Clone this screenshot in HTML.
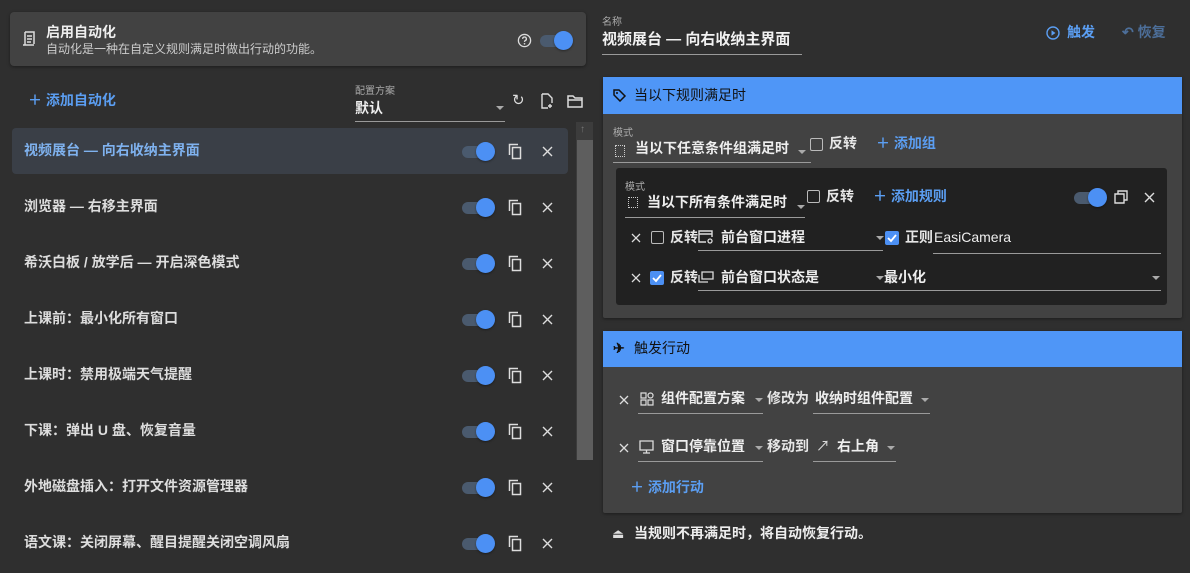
<!DOCTYPE html>
<html><head><meta charset="utf-8"><style>
*{box-sizing:border-box;margin:0;padding:0}
body{width:1190px;height:573px;background:#2f2f2f;font-family:"Liberation Sans","Noto Sans CJK SC",sans-serif;color:#e6e6e6;position:relative;overflow:hidden;line-height:1.25}
.a{position:absolute;white-space:nowrap}
.card{position:absolute;background:#424242;border-radius:4px;box-shadow:0 1px 3px rgba(0,0,0,.4)}
.blue{color:#5b9ef2}
.tg{position:absolute;width:34px;height:22px}
.tg:before{content:"";position:absolute;left:0;top:6px;width:30px;height:12px;border-radius:6px;background:#4a5a6e}
.tg:after{content:"";position:absolute;left:14px;top:2px;width:19px;height:19px;border-radius:50%;background:#4c90f4;box-shadow:0 1px 2px rgba(0,0,0,.4)}
.ul{position:absolute;height:1px;background:#9a9a9a}
.arr{position:absolute;width:0;height:0;border-left:4px solid transparent;border-right:4px solid transparent;border-top:4px solid #aaa}
.cb{position:absolute;width:13px;height:13px;border:1.5px solid #bbb;border-radius:2px}
.cbc{position:absolute;width:14px;height:14px;background:#4c90f4;border-radius:2px}
.lbl{font-size:10px;color:#aaa}
.row{font-size:14px;font-weight:bold;color:#ddd}
</style></head><body>

<div class="card" style="left:10px;top:12px;width:576px;height:54px"></div>
<svg class="a" style="left:21px;top:30px" width="16" height="18" viewBox="0 0 16 18"><path d="M4 2h9v12M4 2v13H2M4 15h9M6 6h5M6 9h5M6 12h4" stroke="#ddd" stroke-width="1.5" fill="none"/></svg>
<div class="a" style="left:46px;top:24px;font-size:14px;font-weight:bold;color:#eee">启用自动化</div>
<div class="a" style="left:46px;top:42px;font-size:12px;color:#ccc">自动化是一种在自定义规则满足时做出行动的功能。</div>
<svg class="a" style="left:517px;top:33px" width="15" height="15" viewBox="0 0 16 16"><circle cx="8" cy="8" r="6.5" stroke="#ddd" stroke-width="1.4" fill="none"/><path d="M6 6.3a2 2 0 1 1 2.6 1.9c-.5.2-.6.6-.6 1.3" stroke="#ddd" stroke-width="1.4" fill="none"/><circle cx="8" cy="11.5" r=".9" fill="#ddd"/></svg>
<div class="tg" style="left:540px;top:29px"></div>

<div class="a blue" style="left:28px;top:92px;font-size:14px;font-weight:bold">＋ 添加自动化</div>
<div class="a lbl" style="left:355px;top:86px">配置方案</div>
<div class="a" style="left:355px;top:100px;font-size:14px;font-weight:bold;color:#eee">默认</div>
<div class="ul" style="left:355px;top:121px;width:150px"></div>
<div class="arr" style="left:496px;top:106px"></div>
<div class="a" style="left:512px;top:92px;font-size:15px;color:#ddd">↻</div>
<svg class="a" style="left:540px;top:93px" width="14" height="16" viewBox="0 0 14 16"><path d="M2 1h6l4 4v5M2 1v14h6M10 11v4M8 13h4" stroke="#ddd" stroke-width="1.4" fill="none"/></svg>
<svg class="a" style="left:567px;top:95px" width="16" height="13" viewBox="0 0 16 13"><path d="M1 1h5l2 2h7v9H1z M1 5h14" stroke="#ddd" stroke-width="1.5" fill="none"/></svg>

<div class="a" style="left:576px;top:122px;width:17px;height:338px;background:#3c3c3c"></div>
<div class="a" style="left:577px;top:140px;width:16px;height:320px;background:#5e5e5e"></div>
<div class="a" style="left:580px;top:124px;font-size:10px;color:#777">↑</div>

<div class="a" style="left:12px;top:128px;width:556px;height:46px;background:#3a3f47;border-radius:4px"></div>
<div class="a row" style="left:24px;top:142px;color:#7fb2ef">视频展台 — 向右收纳主界面</div>
<div class="a row" style="left:24px;top:198px">浏览器 — 右移主界面</div>
<div class="a row" style="left:24px;top:254px">希沃白板 / 放学后 — 开启深色模式</div>
<div class="a row" style="left:24px;top:310px">上课前：最小化所有窗口</div>
<div class="a row" style="left:24px;top:366px">上课时：禁用极端天气提醒</div>
<div class="a row" style="left:24px;top:422px">下课：弹出 U 盘、恢复音量</div>
<div class="a row" style="left:24px;top:478px">外地磁盘插入：打开文件资源管理器</div>
<div class="a row" style="left:24px;top:534px">语文课：关闭屏幕、醒目提醒关闭空调风扇</div>

<div id="ctl"></div>
<script>
var h='';[151,207,263,319,375,431,487,543].forEach(function(y){
h+='<div class="tg" style="left:462px;top:'+(y-11)+'px"></div>';
h+='<svg class="a" style="left:508px;top:'+(y-8)+'px" width="15" height="17" viewBox="0 0 15 17"><path d="M1.5 12V1.5H10" stroke="#ddd" stroke-width="1.5" fill="none"/><rect x="4.5" y="4.5" width="8" height="11" stroke="#ddd" stroke-width="1.5" fill="none"/></svg>';
h+='<svg class="a" style="left:542px;top:'+(y-5)+'px" width="11" height="11" viewBox="0 0 11 11"><path d="M1 1l9 9M10 1l-9 9" stroke="#ddd" stroke-width="1.4"/></svg>';
});document.getElementById('ctl').innerHTML=h;
</script>

<div class="a lbl" style="left:602px;top:17px">名称</div>
<div class="a" style="left:602px;top:31px;font-size:15px;font-weight:bold;color:#f2f2f2">视频展台 — 向右收纳主界面</div>
<div class="ul" style="left:602px;top:54px;width:200px"></div>
<svg class="a" style="left:1046px;top:26px" width="14" height="14" viewBox="0 0 14 14"><circle cx="7" cy="7" r="6" stroke="#5b9ef2" stroke-width="1.4" fill="none"/><path d="M5.5 4.3v5.4L9.5 7z" fill="#5b9ef2"/></svg>
<div class="a blue" style="left:1067px;top:24px;font-size:14px;font-weight:bold">触发</div>
<div class="a" style="left:1122px;top:24px;font-size:14px;font-weight:bold;color:#4d6f9a">↶ 恢复</div>

<div class="card" style="left:603px;top:77px;width:579px;height:241px;border-radius:2px"></div>
<div class="a" style="left:603px;top:77px;width:579px;height:37px;background:#4f96f7"></div>
<svg class="a" style="left:613px;top:89px" width="14" height="13" viewBox="0 0 14 13"><path d="M1 1h5l6 6-5 5-6-6z" stroke="#111" stroke-width="1.5" fill="none"/><circle cx="4" cy="4" r="1" fill="#111"/></svg>
<div class="a" style="left:634px;top:87px;font-size:14px;color:#111">当以下规则满足时</div>

<div class="a lbl" style="left:613px;top:128px">模式</div>
<div class="a" style="left:615px;top:145px;width:10px;height:12px;border:1.5px dotted #ccc"></div>
<div class="a" style="left:635px;top:140px;font-size:14px;font-weight:bold;color:#eee">当以下任意条件组满足时</div>
<div class="ul" style="left:613px;top:162px;width:198px"></div>
<div class="arr" style="left:798px;top:150px"></div>
<div class="cb" style="left:810px;top:138px"></div>
<div class="a" style="left:829px;top:135px;font-size:14px;font-weight:bold">反转</div>
<div class="a blue" style="left:876px;top:135px;font-size:14px;font-weight:bold">＋ 添加组</div>

<div class="a" style="left:616px;top:168px;width:551px;height:137px;background:#212121;border-radius:3px"></div>
<div class="a lbl" style="left:625px;top:182px">模式</div>
<div class="a" style="left:628px;top:197px;width:10px;height:11px;border:1.5px dotted #ccc"></div>
<div class="a" style="left:647px;top:194px;font-size:14px;font-weight:bold;color:#eee">当以下所有条件满足时</div>
<div class="ul" style="left:625px;top:217px;width:180px"></div>
<div class="arr" style="left:797px;top:205px"></div>
<div class="cb" style="left:807px;top:190px"></div>
<div class="a" style="left:826px;top:188px;font-size:14px;font-weight:bold">反转</div>
<div class="a blue" style="left:873px;top:188px;font-size:14px;font-weight:bold">＋ 添加规则</div>
<div class="tg" style="left:1074px;top:186px"></div>
<svg class="a" style="left:1114px;top:190px" width="14" height="14" viewBox="0 0 14 14"><path d="M4 4V1h9v9h-3M1 4h9v9H1z" stroke="#ddd" stroke-width="1.4" fill="none"/></svg>
<svg class="a" style="left:1144px;top:192px" width="11" height="11" viewBox="0 0 11 11"><path d="M1 1l9 9M10 1l-9 9" stroke="#ddd" stroke-width="1.4"/></svg>

<svg class="a" style="left:631px;top:233px" width="10" height="10" viewBox="0 0 10 10"><path d="M1 1l8 8M9 1l-8 8" stroke="#ddd" stroke-width="1.3"/></svg>
<div class="cb" style="left:651px;top:231px"></div>
<div class="a" style="left:670px;top:229px;font-size:14px;font-weight:bold">反转</div>
<svg class="a" style="left:698px;top:230px" width="16" height="14" viewBox="0 0 16 14"><path d="M8 12H1V1h13v6M1 4h13" stroke="#ddd" stroke-width="1.4" fill="none"/><circle cx="12" cy="11" r="2" stroke="#ddd" stroke-width="1.3" fill="none"/></svg>
<div class="a" style="left:721px;top:229px;font-size:14px;font-weight:bold;color:#eee">前台窗口进程</div>
<div class="ul" style="left:698px;top:250px;width:185px"></div>
<div class="arr" style="left:876px;top:236px"></div>
<div class="cbc" style="left:885px;top:231px"></div>
<svg class="a" style="left:885px;top:231px" width="14" height="14"><path d="M3 7l3 3 5-6" stroke="#fff" stroke-width="1.8" fill="none"/></svg>
<div class="a" style="left:905px;top:229px;font-size:14px;font-weight:bold">正则</div>
<div class="a" style="left:934px;top:229px;font-size:14px;color:#eee">EasiCamera</div>
<div class="ul" style="left:933px;top:253px;width:228px"></div>

<svg class="a" style="left:631px;top:273px" width="10" height="10" viewBox="0 0 10 10"><path d="M1 1l8 8M9 1l-8 8" stroke="#ddd" stroke-width="1.3"/></svg>
<div class="cbc" style="left:650px;top:271px"></div>
<svg class="a" style="left:650px;top:271px" width="14" height="14"><path d="M3 7l3 3 5-6" stroke="#fff" stroke-width="1.8" fill="none"/></svg>
<div class="a" style="left:670px;top:269px;font-size:14px;font-weight:bold">反转</div>
<svg class="a" style="left:698px;top:271px" width="16" height="12" viewBox="0 0 16 12"><path d="M4 8V1h11v7zM1 4v7h9" stroke="#ddd" stroke-width="1.3" fill="none"/></svg>
<div class="a" style="left:721px;top:269px;font-size:14px;font-weight:bold;color:#eee">前台窗口状态是</div>
<div class="ul" style="left:698px;top:290px;width:463px"></div>
<div class="arr" style="left:876px;top:276px"></div>
<div class="a" style="left:884px;top:269px;font-size:14px;font-weight:bold;color:#eee">最小化</div>
<div class="arr" style="left:1152px;top:276px"></div>

<div class="card" style="left:603px;top:331px;width:579px;height:182px;border-radius:2px"></div>
<div class="a" style="left:603px;top:331px;width:579px;height:36px;background:#4f96f7"></div>
<div class="a" style="left:613px;top:340px;font-size:14px;color:#111;font-weight:bold">✈</div>
<div class="a" style="left:634px;top:340px;font-size:14px;color:#111">触发行动</div>

<svg class="a" style="left:619px;top:395px" width="10" height="10" viewBox="0 0 10 10"><path d="M1 1l8 8M9 1l-8 8" stroke="#ddd" stroke-width="1.3"/></svg>
<svg class="a" style="left:640px;top:392px" width="14" height="14" viewBox="0 0 14 14"><path d="M1 1h5v5H1zM8 8h5v5H8zM1 8h5v5H1z" stroke="#ddd" stroke-width="1.2" fill="none"/><circle cx="10.5" cy="3.5" r="2.5" stroke="#ddd" stroke-width="1.2" fill="none"/></svg>
<div class="a" style="left:661px;top:390px;font-size:14px;font-weight:bold;color:#eee">组件配置方案</div>
<div class="arr" style="left:755px;top:398px"></div>
<div class="ul" style="left:638px;top:413px;width:125px"></div>
<div class="a" style="left:767px;top:390px;font-size:14px;font-weight:bold">修改为</div>
<div class="a" style="left:815px;top:390px;font-size:14px;font-weight:bold;color:#eee">收纳时组件配置</div>
<div class="arr" style="left:921px;top:398px"></div>
<div class="ul" style="left:813px;top:413px;width:117px"></div>

<svg class="a" style="left:619px;top:443px" width="10" height="10" viewBox="0 0 10 10"><path d="M1 1l8 8M9 1l-8 8" stroke="#ddd" stroke-width="1.3"/></svg>
<svg class="a" style="left:639px;top:440px" width="15" height="14" viewBox="0 0 15 14"><path d="M1 1h13v9H1zM7.5 10v3M4 13h7" stroke="#ddd" stroke-width="1.3" fill="none"/></svg>
<div class="a" style="left:661px;top:438px;font-size:14px;font-weight:bold;color:#eee">窗口停靠位置</div>
<div class="arr" style="left:755px;top:446px"></div>
<div class="ul" style="left:638px;top:461px;width:125px"></div>
<div class="a" style="left:767px;top:438px;font-size:14px;font-weight:bold">移动到</div>
<div class="a" style="left:816px;top:438px;font-size:14px;color:#ddd">↗</div>
<div class="a" style="left:837px;top:438px;font-size:14px;font-weight:bold;color:#eee">右上角</div>
<div class="arr" style="left:887px;top:446px"></div>
<div class="ul" style="left:813px;top:461px;width:83px"></div>

<div class="a blue" style="left:630px;top:479px;font-size:14px;font-weight:bold">＋ 添加行动</div>

<div class="a" style="left:612px;top:526px;font-size:13px;color:#ddd">⏏</div>
<div class="a" style="left:634px;top:525px;font-size:14px;font-weight:bold;color:#eee">当规则不再满足时，将自动恢复行动。</div>
</body></html>
